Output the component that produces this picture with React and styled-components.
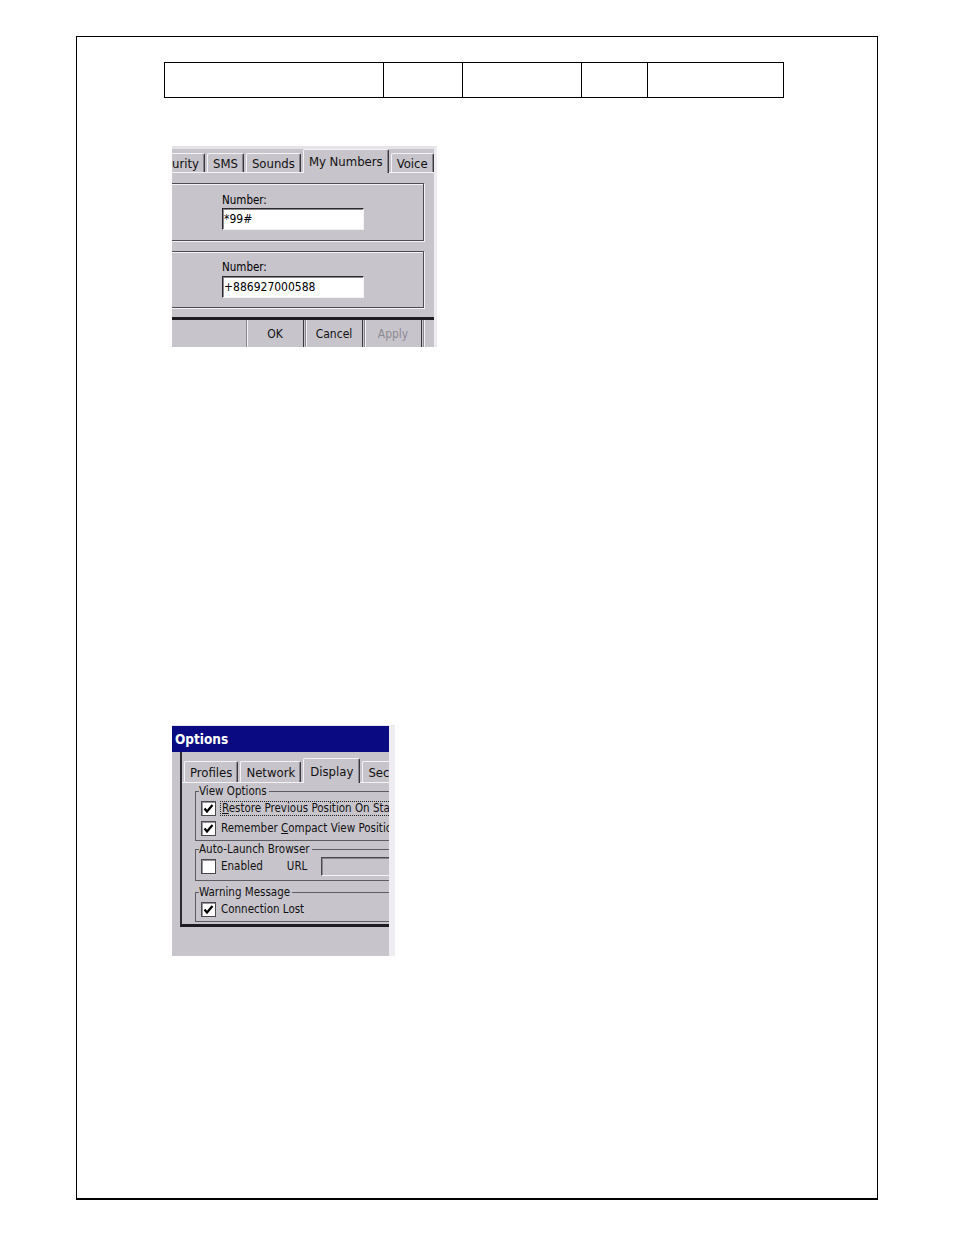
import React from 'react';
import styled, {createGlobalStyle} from 'styled-components';

const GRAY = '#c8c4cc';
const LIGHT = '#f4f2f6';
const DARK = '#3a383c';
const MID = '#8a868e';
const UI_FONT = "'DejaVu Sans Condensed', 'DejaVu Sans', 'Liberation Sans', sans-serif";

const GlobalStyle = createGlobalStyle`
  html, body {
    margin: 0;
    padding: 0;
    background: #fff;
  }
  body {
    font-family: ${UI_FONT};
    color: #000;
  }
`;

const Sheet = styled.div`
  box-sizing: border-box;
  width: 802px;
  height: 1164px;
  margin: 36px 0 0 76px;
  border: 1px solid #000;
  border-bottom-width: 2px;
  padding: 25px 0 0 87px;
`;

const HeaderRow = styled.div`
  box-sizing: border-box;
  display: grid;
  grid-template-columns: 218px 79px 119px 66px 136px;
  width: 620px;
  height: 36px;
  border: 1px solid #000;
`;

const HeaderCell = styled.div`
  box-sizing: border-box;
  border-left: ${(p) => (p.$first ? 'none' : '1px solid #000')};
`;

/* ---------- shared dialog bits ---------- */

const TabStrip = styled.div`
  box-sizing: border-box;
  flex-shrink: 0;
  display: flex;
  align-items: flex-end;
  gap: 2px;
  height: ${(p) => p.$h}px;
  padding-left: ${(p) => p.$indent || 0}px;
`;

const Tab = styled.div`
  box-sizing: border-box;
  flex-shrink: 0;
  position: relative;
  z-index: 1;
  display: flex;
  align-items: center;
  height: ${(p) => p.$h}px;
  margin-bottom: ${(p) => (p.$active ? -1 : 0)}px;
  padding: 0 ${(p) => p.$pad}px;
  background: ${GRAY};
  border: 1px solid ${LIGHT};
  border-right-color: ${DARK};
  border-bottom: none;
  border-radius: 2px 2px 0 0;
  box-shadow: inset -1px 0 0 ${MID};
  font-size: 13px;
  color: #111;
  white-space: nowrap;
  ${(p) => p.$cut && 'border-left: none; border-radius: 0 2px 0 0; padding-left: 0;'}
`;

/* ---------- screenshot 1 : My Numbers ---------- */

const NumbersShot = styled.div`
  box-sizing: border-box;
  display: flex;
  flex-direction: column;
  width: 265px;
  height: 201px;
  margin: 48px 0 0 8px;
  background: ${GRAY};
  border-top: 3px solid #e6e3e8;
  border-right: 3px solid #eeecf0;
  overflow: hidden;
`;

const NumbersPage = styled.div`
  display: flex;
  flex-direction: column;
  gap: 10px;
  padding: 10px 0 9px;
  border-top: 1px solid ${LIGHT};
`;

const NumberGroup = styled.div`
  box-sizing: border-box;
  width: 262px;
  height: ${(p) => p.$h}px;
  margin-left: -10px;
  padding: ${(p) => p.$top}px 0 0 59px;
  border: 1px solid #4e4b52;
  box-shadow: 1px 1px 0 ${LIGHT}, inset 1px 1px 0 ${LIGHT};
`;

const FieldLabel = styled.div`
  font-size: 11.5px;
  line-height: 14px;
`;

const NumberInput = styled.input`
  box-sizing: border-box;
  display: block;
  width: 142px;
  height: 22px;
  margin: ${(p) => p.$gap}px 0 0;
  padding: 0 1px;
  background: #fff;
  border: 1px solid;
  border-color: #2a282c ${LIGHT} ${LIGHT} #2a282c;
  box-shadow: inset 1px 1px 0 ${MID};
  font-family: ${UI_FONT};
  font-size: 12px;
  color: #000;
  outline: none;
`;

const ButtonBar = styled.div`
  flex: 1;
  display: flex;
  gap: 1px;
  padding-left: 74px;
  border-top: 3px solid #1e1c20;
`;

const DlgButton = styled.div`
  box-sizing: border-box;
  flex-shrink: 0;
  display: flex;
  align-items: center;
  justify-content: center;
  width: 58px;
  background: ${GRAY};
  border-left: 1px solid ${MID};
  border-right: 1px solid ${DARK};
  box-shadow: inset 1px 0 0 ${LIGHT};
  font-size: 12px;
  color: ${(p) => (p.$disabled ? '#8e8a92' : '#111')};
`;

/* ---------- screenshot 2 : Options ---------- */

const OptionsShot = styled.div`
  box-sizing: border-box;
  display: flex;
  flex-direction: column;
  width: 223px;
  height: 231px;
  margin: 378px 0 0 8px;
  background: ${GRAY};
  border-top: 1px solid #e8e6ea;
  border-right: 6px solid #efedf1;
  overflow: hidden;
`;

const TitleBar = styled.div`
  flex-shrink: 0;
  display: flex;
  align-items: center;
  height: 26px;
  padding-left: 3px;
  background: #0a0a82;
  color: #fff;
  font-size: 13.5px;
  font-weight: bold;
`;

const DialogBody = styled.div`
  flex: 1;
  padding-left: 8px;
`;

const SheetFrame = styled.div`
  box-sizing: border-box;
  height: 175px;
  border-left: 2px solid #2e2c30;
  border-bottom: 3px solid #1e1c20;
`;

const TabPage = styled.div`
  padding-left: 13px;
  border-top: 1px solid ${LIGHT};
`;

const Group = styled.fieldset`
  box-sizing: border-box;
  width: 240px;
  min-width: 0;
  margin: ${(p) => p.$mt}px 0 0;
  padding: 0 0 ${(p) => p.$pb}px;
  border: 1px solid #5e5b62;
`;

const Legend = styled.legend`
  margin-left: 3px;
  padding: 0 2px 0 0;
  font-size: 11.5px;
  line-height: 13px;
  color: #111;
  white-space: nowrap;
`;

const CheckRow = styled.div`
  display: flex;
  align-items: center;
  gap: 5px;
  height: 20px;
  padding-left: 5px;
  font-size: 11.5px;
  color: #111;
  white-space: nowrap;
`;

const Box = styled.div`
  box-sizing: border-box;
  flex-shrink: 0;
  width: 15px;
  height: 15px;
  background: #fff;
  border: 1px solid #4a484c;
  box-shadow: inset 1px 1px 0 #9a969e;
`;

const FocusText = styled.span`
  margin-left: -1px;
  padding: 0 1px;
  border: 1px dotted #222;
  line-height: 13px;
`;

const UrlLabel = styled.span`
  margin-left: 19px;
`;

const UrlInput = styled.div`
  box-sizing: border-box;
  flex-shrink: 0;
  width: 120px;
  height: 19px;
  margin-left: 9px;
  border: 1px solid;
  border-color: #4a484c ${LIGHT} ${LIGHT} #4a484c;
  box-shadow: inset 1px 1px 0 ${MID};
  background: ${GRAY};
`;

const CheckBox = ({checked}) => (
  <Box>
    {checked && (
      <svg width='13' height='13' viewBox='0 0 13 13'>
        <path d='M2.5 6.5 L5 9.5 L10.5 3' fill='none' stroke='#000' strokeWidth='2.2' />
      </svg>
    )}
  </Box>
);

const numberTabs = [
  {label: 'urity', cut: true},
  {label: 'SMS'},
  {label: 'Sounds'},
  {label: 'My Numbers', active: true},
  {label: 'Voice'},
];

const optionTabs = [
  {label: 'Profiles'},
  {label: 'Network'},
  {label: 'Display', active: true},
  {label: 'Security'},
];

const App = () => {
  return (
    <>
      <GlobalStyle />
      <Sheet>
        <HeaderRow>
          <HeaderCell $first />
          <HeaderCell />
          <HeaderCell />
          <HeaderCell />
          <HeaderCell />
        </HeaderRow>

        <NumbersShot>
          <TabStrip $h={23}>
            {numberTabs.map((t) => (
              <Tab key={t.label} $h={t.active ? 24 : 19} $active={t.active} $cut={t.cut} $pad={5}>
                {t.label}
              </Tab>
            ))}
          </TabStrip>
          <NumbersPage>
            <NumberGroup $h={58} $top={9}>
              <FieldLabel>Number:</FieldLabel>
              <NumberInput $gap={1} readOnly defaultValue='*99#' />
            </NumberGroup>
            <NumberGroup $h={57} $top={8}>
              <FieldLabel>Number:</FieldLabel>
              <NumberInput $gap={2} readOnly defaultValue='+886927000588' />
            </NumberGroup>
          </NumbersPage>
          <ButtonBar>
            <DlgButton>OK</DlgButton>
            <DlgButton>Cancel</DlgButton>
            <DlgButton $disabled>Apply</DlgButton>
            <DlgButton />
          </ButtonBar>
        </NumbersShot>

        <OptionsShot>
          <TitleBar>Options</TitleBar>
          <DialogBody>
            <SheetFrame>
              <TabStrip $h={30} $indent={2}>
                {optionTabs.map((t) => (
                  <Tab key={t.label} $h={t.active ? 25 : 21} $active={t.active} $pad={t.active ? 6 : 5}>
                    {t.label}
                  </Tab>
                ))}
              </TabStrip>
              <TabPage>
                <Group $mt={2} $pb={2}>
                  <Legend>View Options</Legend>
                  <CheckRow>
                    <CheckBox checked />
                    <FocusText>
                      <u>R</u>estore Previous Position On Startup
                    </FocusText>
                  </CheckRow>
                  <CheckRow>
                    <CheckBox checked />
                    <span>
                      Remember <u>C</u>ompact View Position
                    </span>
                  </CheckRow>
                </Group>
                <Group $mt={2} $pb={4}>
                  <Legend>Auto-Launch Browser</Legend>
                  <CheckRow>
                    <CheckBox />
                    <span>Enabled</span>
                    <UrlLabel>URL</UrlLabel>
                    <UrlInput />
                  </CheckRow>
                </Group>
                <Group $mt={5} $pb={2}>
                  <Legend>Warning Message</Legend>
                  <CheckRow>
                    <CheckBox checked />
                    <span>Connection Lost</span>
                  </CheckRow>
                </Group>
              </TabPage>
            </SheetFrame>
          </DialogBody>
        </OptionsShot>
      </Sheet>
    </>
  );
};

export default App;
